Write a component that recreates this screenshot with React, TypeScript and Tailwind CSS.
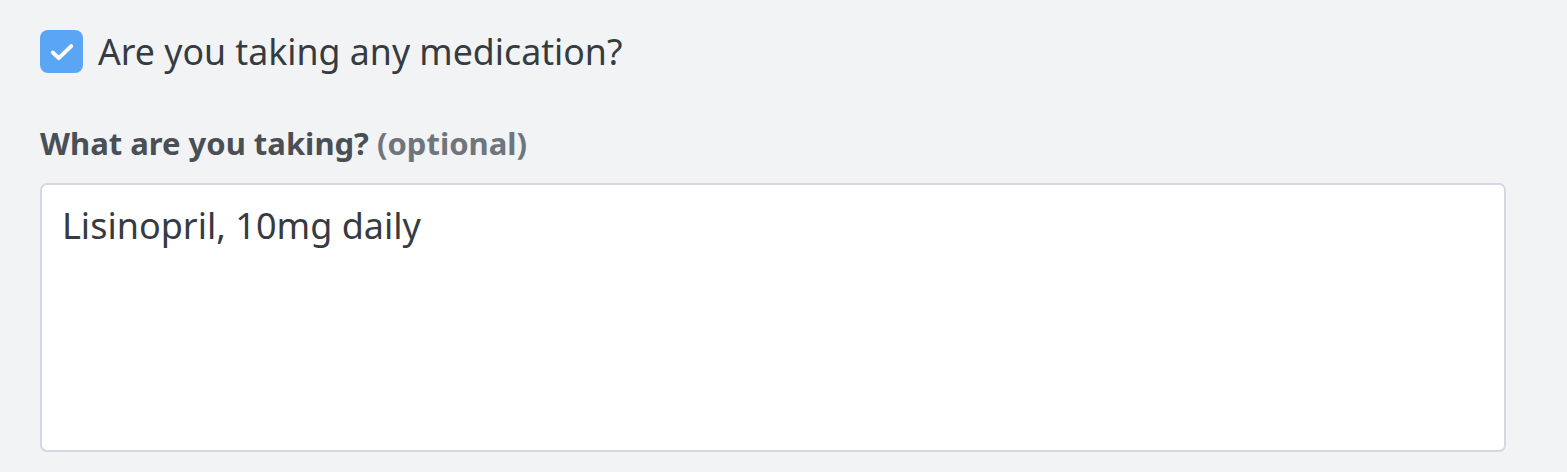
import React, { useState } from "react";

export default function App() {
  const [taking, setTaking] = useState(true);
  const [meds, setMeds] = useState("Lisinopril, 10mg daily");

  return (
    <div
      className="min-h-[472px] w-full bg-[#f1f3f5] pl-[40px] pr-[61px] pt-[30px] text-[#363b42]"
      style={{ fontFamily: "'Noto Sans', 'Open Sans', sans-serif" }}
    >
      <label className="flex items-center gap-[15px] cursor-pointer">
        <button
          type="button"
          onClick={() => setTaking(!taking)}
          className="flex h-[43px] w-[43px] shrink-0 items-center justify-center rounded-[8px] bg-[#5ba6f4]"
        >
          {taking && (
            <svg width="26" height="26" viewBox="0 0 24 24" fill="none">
              <path
                d="M3.5 12.5l5.5 5.2L20.5 6.5"
                stroke="white"
                strokeWidth="3.6"
                strokeLinecap="round"
                strokeLinejoin="round"
              />
            </svg>
          )}
        </button>
        <span className="text-[35.7px] leading-[43px]">Are you taking any medication?</span>
      </label>

      <div className="mt-[50px] text-[31px] leading-[40px] font-bold text-[#4a4f56]">
        What are you taking? <span className="text-[#6e767c]">(optional)</span>
      </div>

      <textarea
        value={meds}
        onChange={(e) => setMeds(e.target.value)}
        className="mt-[20px] block h-[269px] w-full resize-none rounded-[7px] border-2 border-[#d5d8e4] bg-white px-[20px] py-[17px] text-[36px] leading-[48px] text-[#363b42] outline-none"
      />
    </div>
  );
}
